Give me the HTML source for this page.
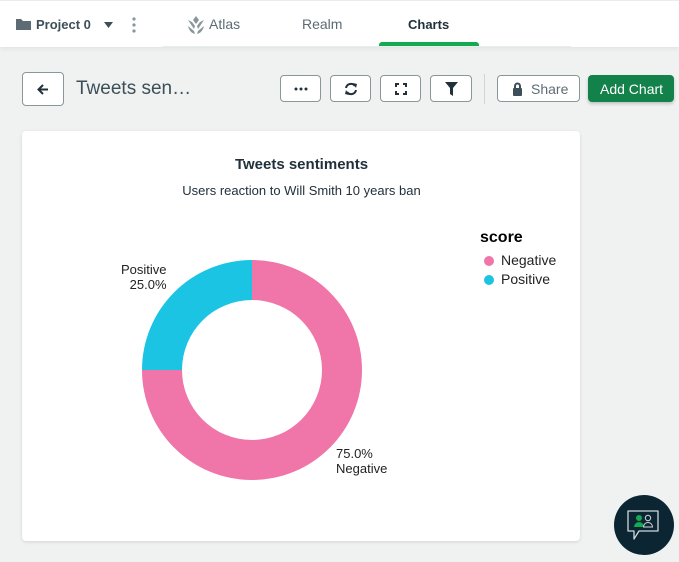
<!DOCTYPE html>
<html><head><style>
body{margin:0;width:679px;height:562px;background:#eff2f1;font-family:"Liberation Sans",sans-serif;position:relative;overflow:hidden;color:#21313c}
.hdr{position:absolute;left:0;top:0;width:679px;height:46px;background:#fff;border-top:1px solid #e7eeec;box-shadow:0 2px 4px rgba(0,0,0,.06)}
.hdr .sep{position:absolute;top:45px;left:162px;width:409px;height:1px;background:#e7eeec}
.t{position:absolute;font-size:14px}
.btn{position:absolute;top:75px;height:27px;border:1px solid #89979b;border-radius:4px;background:#fff;box-sizing:border-box}
</style></head><body>
<div class="hdr">
 <svg style="position:absolute;left:16px;top:17px" width="15" height="12"><path d="M0 1h5l2 2h8v9H0z" fill="#5d6c74"/></svg>
 <div class="t" style="left:36px;top:16px;font-size:13px;font-weight:bold;color:#3d4f58">Project 0</div>
 <svg style="position:absolute;left:104px;top:21px" width="9" height="6"><path d="M0 0h9L4.5 6z" fill="#3d4f58"/></svg>
 <svg style="position:absolute;left:132px;top:16px" width="4" height="16"><circle cx="2" cy="2" r="1.6" fill="#89979b"/><circle cx="2" cy="8" r="1.6" fill="#89979b"/><circle cx="2" cy="14" r="1.6" fill="#89979b"/></svg>
 <svg style="position:absolute;left:186px;top:14px" width="20" height="20" viewBox="0 0 20 20"><path d="M10 1L7 5 10 9 13 5z M2 5l4 2 3 4-1 3zM18 5l-4 2-3 4 1 3zM2 11l6 5 1 3C5 18 3 15 2 11zM18 11l-6 5-1 3c4-1 6-4 7-8z" fill="#89979b"/></svg>
 <div class="t" style="left:209px;top:15px;color:#5d6c74">Atlas</div>
 <div class="t" style="left:302px;top:15px;color:#5d6c74">Realm</div>
 <div class="t" style="left:408px;top:16px;font-size:13px;font-weight:bold;color:#21313c">Charts</div>
 <div style="position:absolute;left:379px;top:41px;width:100px;height:5px;background:#13aa52;border-radius:3px 3px 0 0"></div>
 <div class="sep"></div>
</div>
<div class="btn" style="left:22px;top:72px;width:42px;height:34px"><svg style="position:absolute;left:14px;top:11px" width="12" height="11"><path d="M11 5.5H2M6 1L1.5 5.5 6 10" stroke="#21313c" stroke-width="2" fill="none"/></svg></div>
<div class="t" style="left:76px;top:78px;font-size:19px;color:#3d4f58">Tweets sen…</div>
<div class="btn" style="left:280px;width:41px"><svg style="position:absolute;left:13px;top:11px" width="14" height="4"><circle cx="2" cy="2" r="1.5" fill="#21313c"/><circle cx="7" cy="2" r="1.5" fill="#21313c"/><circle cx="12" cy="2" r="1.5" fill="#21313c"/></svg></div>
<div class="btn" style="left:330px;width:41px"><svg style="position:absolute;left:13px;top:6px" width="14" height="14" viewBox="0 0 14 14"><path d="M2 6a5 5 0 0 1 9-2M12 8a5 5 0 0 1-9 2" stroke="#21313c" stroke-width="2" fill="none"/><path d="M9 1l4 1-1 4zM5 13l-4-1 1-4z" fill="#21313c"/></svg></div>
<div class="btn" style="left:380px;width:41px"><svg style="position:absolute;left:14px;top:7px" width="12" height="12"><path d="M1 4V1h3M8 1h3v3M11 8v3H8M4 11H1V8" stroke="#21313c" stroke-width="2" fill="none"/></svg></div>
<div class="btn" style="left:430px;width:42px"><svg style="position:absolute;left:14px;top:6px" width="13" height="14"><path d="M0 0h13L8 6v8L5 12V6z" fill="#21313c"/></svg></div>
<div style="position:absolute;left:484px;top:74px;width:1px;height:30px;background:#d0d6d8"></div>
<div class="btn" style="left:497px;width:83px"><svg style="position:absolute;left:14px;top:6px" width="11" height="14"><path d="M3 6V4a2.5 2.5 0 0 1 5 0v2" stroke="#3d4f58" stroke-width="2" fill="none"/><rect x="1" y="6" width="9" height="8" rx="1" fill="#3d4f58"/></svg><span style="position:absolute;left:33px;top:5px;font-size:14px;color:#5d6c74">Share</span></div>
<div class="btn" style="left:588px;width:86px;background:#13814a;border-color:#13814a;box-shadow:0 2px 3px rgba(0,0,0,.2)"><span style="position:absolute;left:11px;top:5px;font-size:14px;color:#fff">Add Chart</span></div>
<div style="position:absolute;left:22px;top:131px;width:558px;height:410px;background:#fff;border-radius:4px;box-shadow:0 1px 3px rgba(0,0,0,.12)"></div>
<div class="t" style="left:0;width:603px;text-align:center;top:156px;font-weight:bold;font-size:15px;color:#21313c">Tweets sentiments</div>
<div class="t" style="left:0;width:603px;text-align:center;top:183px;font-size:13px;color:#21313c">Users reaction to Will Smith 10 years ban</div>
<svg style="position:absolute;left:0;top:0" width="679" height="562">
 <path d="M252 260A110 110 0 1 1 142 370L182 370A70 70 0 1 0 252 300Z" fill="#f075a8"/>
 <path d="M142 370A110 110 0 0 1 252 260L252 300A70 70 0 0 0 182 370Z" fill="#1cc4e4"/>
 <circle cx="489" cy="261" r="5" fill="#f075a8"/>
 <circle cx="489" cy="280" r="5" fill="#1cc4e4"/>
</svg>
<div class="t" style="left:480px;top:229px;font-weight:bold;font-size:16px;color:#000">score</div>
<div class="t" style="left:501px;top:252px;color:#222">Negative</div>
<div class="t" style="left:501px;top:271px;color:#222">Positive</div>
<div class="t" style="left:121px;top:262px;font-size:13px;color:#222;text-align:right;line-height:15px">Positive<br>&nbsp;&nbsp;25.0%</div>
<div class="t" style="left:336px;top:446px;font-size:13px;color:#222;line-height:15px">75.0%<br>Negative</div>
<div style="position:absolute;left:614px;top:495px;width:60px;height:60px;border-radius:50%;background:#0b2532"></div>
<svg style="position:absolute;left:625px;top:508px" width="38" height="36"><path d="M3 3h30v20H14l-5 8v-8H3z" stroke="#cfd8dc" stroke-width="1.3" fill="none" stroke-linejoin="round"/><circle cx="14" cy="10" r="3" fill="#13aa52"/><path d="M9 19a5 5 0 0 1 10 0z" fill="#13aa52"/><circle cx="23" cy="10" r="2.7" stroke="#cfd8dc" fill="none"/><path d="M18.5 19a4.5 4.5 0 0 1 9 0z" stroke="#cfd8dc" fill="none"/></svg>
</body></html>
